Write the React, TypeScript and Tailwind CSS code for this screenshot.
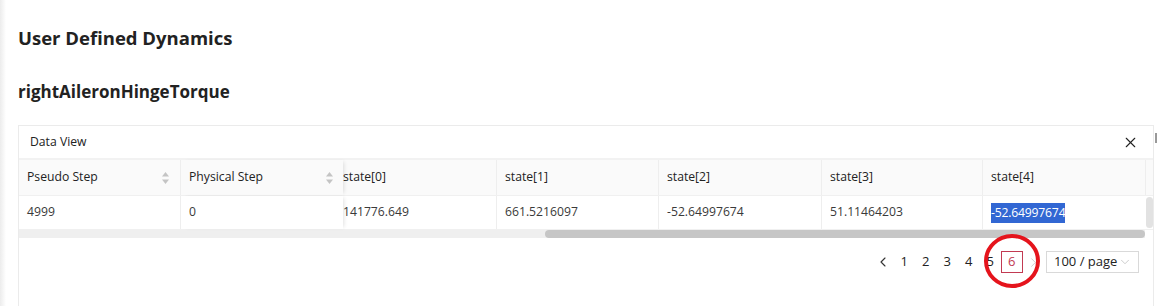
import { X, ChevronLeft, ChevronRight, ChevronDown } from 'lucide-react';

const font = { fontFamily: '"Open Sans", "Noto Sans", Arial, sans-serif' };

function Sorter() {
  return (
    <svg width="9" height="14" viewBox="0 0 9 14" className="shrink-0">
      <path d="M4.5 1 L8 5.5 L1 5.5 Z" fill="#c4c4c4" />
      <path d="M4.5 13 L8 8.5 L1 8.5 Z" fill="#c4c4c4" />
    </svg>
  );
}

const columns = [
  { label: 'state[0]', value: '141776.649', w: 'w-[154px]', pad: 'pl-0' },
  { label: 'state[1]', value: '661.5216097', w: 'w-[162px]', pad: 'pl-[8px]' },
  { label: 'state[2]', value: '-52.64997674', w: 'w-[163px]', pad: 'pl-[8px]' },
  { label: 'state[3]', value: '51.11464203', w: 'w-[161px]', pad: 'pl-[8px]' },
];

export default function App() {
  return (
    <div className="relative flex h-[306px] w-[1171px] overflow-hidden bg-white text-[#222]" style={font}>
      <div className="w-[6px] shrink-0 bg-gradient-to-r from-[#ececec] to-white" />

      <main className="flex-1 pl-[12px] pt-[26px]">
        <h1 className="text-[18.5px] font-bold leading-[24px] text-[#222]">User Defined Dynamics</h1>
        <h2 className="mt-[30px] text-[17px] font-bold leading-[24px] text-[#222]">rightAileronHingeTorque</h2>

        <div className="flex">
          <section className="mt-[21px] h-[200px] w-[1136px] border border-[#ebebeb]">
            <div className="flex h-[32px] items-center justify-between pl-[11px] pr-[14px] text-[12.2px]">
              <span>Data View</span>
              <X size={17} strokeWidth={1.5} className="text-[#222]" />
            </div>

            <div className="border-t-2 border-[#f2f2f2] text-[12.2px]">
              {/* header row */}
              <div className="flex h-[35px] bg-[#fafafa]">
                <div className="flex w-[162px] items-center justify-between border-r border-[#eeeeee] pl-[8px] pr-[10px]">
                  <span>Pseudo Step</span>
                  <Sorter />
                </div>
                <div className="relative z-10 flex w-[162px] items-center justify-between bg-[#fafafa] pl-[8px] pr-[9px] shadow-[3px_0_4px_-2px_rgba(0,0,0,0.12)]">
                  <span>Physical Step</span>
                  <Sorter />
                </div>
                {columns.map((c) => (
                  <div key={c.label} className={`flex ${c.w} items-center border-r border-[#eeeeee] ${c.pad}`}>
                    {c.label}
                  </div>
                ))}
                <div className="flex w-[162px] items-center pl-[8px]">state[4]</div>
                <div className="w-[8px] border-l border-[#eeeeee]" />
              </div>

              {/* data row */}
              <div className="flex h-[35px] border-t border-b border-[#f0f0f0] bg-white text-[#3a3a3a]">
                <div className="flex w-[162px] items-center border-r border-[#eeeeee] pl-[8px]">4999</div>
                <div className="relative z-10 flex w-[162px] items-center bg-white pl-[8px] shadow-[3px_0_4px_-2px_rgba(0,0,0,0.12)]">0</div>
                {columns.map((c) => (
                  <div key={c.label} className={`flex ${c.w} items-center border-r border-[#eeeeee] ${c.pad}`}>
                    {c.value}
                  </div>
                ))}
                <div className="flex w-[162px] items-center pl-[8px]">
                  <span className="bg-[#3267d3] leading-[20px] tracking-[-0.2px] text-white">-52.64997674</span>
                </div>
                <div className="flex w-[8px] justify-center py-[1px]">
                  <div className="w-[7px] rounded-full bg-[#e2e2e2]" />
                </div>
              </div>

              {/* horizontal scrollbar */}
              <div className="flex h-[8px] w-[1126px] bg-[#efefef]">
                <div className="w-[526px]" />
                <div className="flex-1 rounded-full bg-[#c6c6c6]" />
              </div>
            </div>

            {/* pagination */}
            <div className="mt-[13px] flex items-center justify-end pr-[14px] text-[13px]">
              <span className="flex w-[21.5px] justify-center">
                <ChevronLeft size={16} strokeWidth={1.7} className="text-[#333]" />
              </span>
              {[1, 2, 3, 4, 5].map((n) => (
                <span key={n} className="w-[21.5px] text-center">{n}</span>
              ))}
              <span className="flex h-[22px] w-[21.5px] items-center justify-center border border-[#c23a52] text-[#c23a52]">6</span>
              <span className="flex w-[21.5px] justify-center">
                <ChevronRight size={15} strokeWidth={1.6} className="text-[#cfcfcf]" />
              </span>
              <div className="ml-[2px] flex h-[22px] w-[93px] items-center justify-between border border-[#d9d9d9] pl-[7px] pr-[6px]">
                <span>100 / page</span>
                <ChevronDown size={14} strokeWidth={1.4} className="text-[#c2c2c2]" />
              </div>
            </div>
          </section>
          <div className="ml-[1px] mt-[29px] h-[10px] w-[2px] bg-[#999]" />
        </div>
      </main>

      {/* annotation */}
      <svg className="pointer-events-none absolute left-[983px] top-[233px]" width="58" height="56" viewBox="0 0 58 56">
        <ellipse cx="29" cy="28" rx="26" ry="25" fill="none" stroke="#e5141c" strokeWidth="4" />
      </svg>
    </div>
  );
}
